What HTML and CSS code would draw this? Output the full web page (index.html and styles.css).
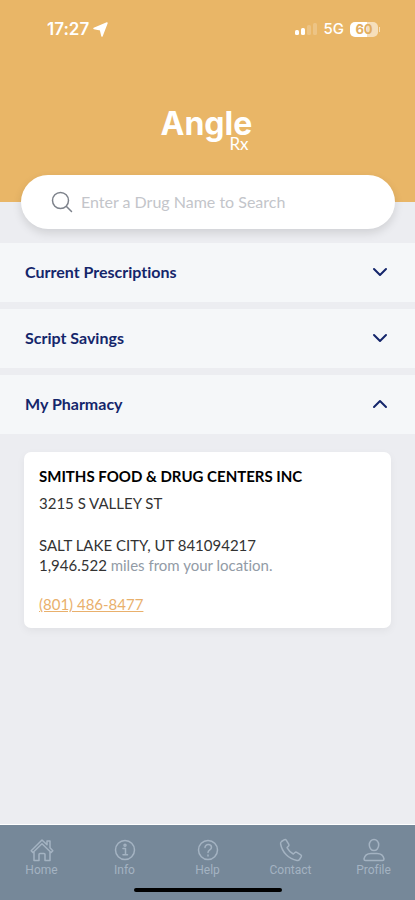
FILE: index.html
```html
<!DOCTYPE html>
<html lang="en">
<head>
  <meta charset="UTF-8" />
  <meta name="viewport" content="width=device-width, initial-scale=1" />
  <title>Angle Rx</title>
  <link rel="stylesheet" href="styles.css">
</head>
<body>

<header class="header">
  <div class="status-bar">
    <div class="status-left">
      <span class="time">17:27</span>
      <svg width="15" height="15" viewBox="0 0 15 15"><path d="M14 1L9 14L7.500 7.800L1 6.500Z" fill="#fff" stroke="#fff" stroke-width="1.500" stroke-linejoin="round"/></svg>
    </div>
    <div class="status-right">
      <svg width="22" height="14" viewBox="0 0 22 14" fill="#fff">
        <rect x="0" y="8" width="4" height="5" rx="1.500"/>
        <rect x="6" y="6" width="4" height="7" rx="1.500"/>
        <rect x="12" y="3" width="4" height="10" rx="1.500" opacity=".2"/>
        <rect x="18" y="1" width="4" height="12" rx="1.500" opacity=".2"/>
      </svg>
      <span class="network">5G</span>
      <span class="battery">60</span>
      <span class="battery-tip"></span>
    </div>
  </div>
  <div class="logo">
    <div class="logo-name">Angle</div>
    <div class="logo-rx">Rx</div>
  </div>
</header>

<main>
  <div class="search">
    <svg width="22" height="22" viewBox="0 0 22 22" fill="none" stroke="#7d828b" stroke-width="1.500" stroke-linecap="round"><circle cx="9.500" cy="9.500" r="8"/><path d="M15.500 15.500L20.500 20.500"/></svg>
    <input type="text" id="drug" aria-label="Drug name" placeholder="Enter a Drug Name to Search" />
  </div>

  <div class="sections">
    <button class="section">
      Current Prescriptions
      <svg class="chevron" viewBox="0 0 16 10"><path d="M2 2L8 8L14 2"/></svg>
    </button>
    <button class="section">
      Script Savings
      <svg class="chevron" viewBox="0 0 16 10"><path d="M2 2L8 8L14 2"/></svg>
    </button>
    <button class="section" aria-expanded="true">
      My Pharmacy
      <svg class="chevron" viewBox="0 0 16 10"><path d="M2 8L8 2L14 8"/></svg>
    </button>
  </div>

  <div class="card">
    <h2>SMITHS FOOD &amp; DRUG CENTERS INC</h2>
    <p class="street">3215 S VALLEY ST</p>
    <p>SALT LAKE CITY, UT 841094217</p>
    <p>1,946.522 <span class="muted">miles from your location.</span></p>
    <a class="phone" href="tel:8014868477">(801) 486-8477</a>
  </div>
</main>

<footer class="footer">
  <nav class="tabs">
    <a class="tab" href="#home">
      <svg class="icon" viewBox="0 0 24 24"><path d="M4 13.500L2.800 14.500L1.200 12.800L12 2L17 6.800V3H20V9.800L22.800 12.800L21.200 14.500L20 13.500V22.500H15V16.500Q15 15.500 14 15.500H10Q9 15.500 9 16.500V22.500H4ZM4 13.500L12 5.800L20 13.500"/></svg>
      Home
    </a>
    <a class="tab" href="#info">
      <svg class="icon" viewBox="0 0 24 24"><circle cx="12" cy="12" r="9.500"/><circle cx="12" cy="7.300" r="1"/><path d="M10 10.500H12.500V16.500M10 16.800H14.500"/></svg>
      Info
    </a>
    <a class="tab" href="#help">
      <svg class="icon" viewBox="0 0 24 24"><circle cx="12" cy="12" r="9.500"/><path d="M9 9.500C9 5.500 15.500 5.800 15.500 9.300C15.500 12 12 11.700 12 14.500M12 17V18"/></svg>
      Help
    </a>
    <a class="tab" href="#contact">
      <svg class="icon" viewBox="0 0 24 24"><path d="M2.500 3.500L5.500 1.700Q6.700 1.200 7.400 2.300L9.800 6.300Q10.300 7.300 9.500 8.100L8 9.700Q10.200 13.800 14.300 16L16 14.500Q16.800 13.800 17.800 14.400L21.800 16.800Q22.900 17.600 22.300 18.700L20.500 21.500Q19.600 22.700 18 22.400C9.500 20.800 3.300 14.500 1.600 6Q1.300 4.400 2.500 3.500Z"/></svg>
      Contact
    </a>
    <a class="tab" href="#profile">
      <svg class="icon" viewBox="0 0 24 24"><ellipse cx="12" cy="7" rx="4.700" ry="5.500"/><path d="M2 21Q3 15.500 9 15.500H15Q21 15.500 22 21Q22 22.500 20.500 22.500H3.500Q2 22.500 2 21Z"/></svg>
      Profile
    </a>
  </nav>
  <div class="home-bar"></div>
</footer>

</body>
</html>
```

FILE: styles.css
```css
* {
  box-sizing: border-box;
}

body {
  font-family: Lato, "Liberation Sans", sans-serif;
  font-size: 16px;
  line-height: 20px;
  font-variant-ligatures: none;
  background: #ecedf1;
  margin: 0;
  min-height: 100vh;
  display: flex;
  flex-direction: column;
}

.header {
  background: #e9b667;
  color: #fff;
  height: 202px;
}

.status-bar {
  display: flex;
  justify-content: space-between;
  align-items: center;
  padding: 19px 35px 0 47px;
  font-family: Inter, sans-serif;
}

.status-left, .status-right {
  display: flex;
  align-items: center;
}

.time {
  font-size: 17px;
  font-weight: 600;
  margin-right: 4px;
}

.network {
  font-size: 15px;
  font-weight: 500;
  margin: 0 6px 0 7px;
}

.battery {
  width: 28px;
  height: 15px;
  border-radius: 5px;
  background: linear-gradient(to right, #fff 60%, #f6dfbb 60%);
  color: #e2ad60;
  font-size: 13px;
  font-weight: 700;
  line-height: 15px;
  text-align: center;
}

.battery-tip {
  width: 1px;
  height: 5px;
  margin-left: 1px;
  background: #f6dfbb;
}

.logo {
  width: 94px;
  margin: 69px auto 0;
}

.logo-name {
  font-family: Inter, sans-serif;
  font-size: 32px;
  font-weight: 700;
  line-height: 32px;
}

.logo-rx {
  font-size: 17px;
  line-height: 8px;
  text-align: right;
  padding-right: 6px;
}

.search {
  display: flex;
  align-items: center;
  gap: 8px;
  height: 54px;
  margin: -27px 20px 14px 21px;
  padding: 0 30px;
  background: #fff;
  border-radius: 27px;
  box-shadow: 0 4px 10px rgba(0, 0, 0, 0.12);
}

.search input {
  flex: 1;
  min-width: 0;
  border: none;
  outline: none;
  padding: 0;
  background: transparent;
  font: inherit;
}

.search input::placeholder {
  color: #c3c5ca;
}

.sections {
  display: flex;
  flex-direction: column;
  gap: 7px;
}

.section {
  display: flex;
  justify-content: space-between;
  align-items: center;
  height: 59px;
  padding: 0 27px 1px 25px;
  border: none;
  background: #f5f7f9;
  color: #14266b;
  font: inherit;
  font-weight: 700;
  font-variant-ligatures: none;
  cursor: pointer;
}

.chevron {
  width: 16px;
  height: 10px;
  fill: none;
  stroke: #14266b;
  stroke-width: 2;
  stroke-linecap: round;
  stroke-linejoin: round;
}

.card {
  margin: 18px 24px;
  padding: 14px 15px;
  background: #fff;
  border-radius: 7px;
  box-shadow: 0 3px 8px rgba(0, 0, 0, 0.05);
  color: #333;
  font-size: 15px;
}

.card h2 {
  margin: 0 0 7px;
  font-size: 15px;
  font-weight: 700;
  color: #000;
}

.card p {
  margin: 0;
}

.card .street {
  margin-bottom: 22px;
}

.muted {
  color: #929ba6;
}

.phone {
  display: block;
  margin-top: 19px;
  color: #e9b06c;
}

.footer {
  margin-top: auto;
  border-top: 1px solid #fff;
  background: #768899;
  padding: 13px 0 8px;
}

.tabs {
  display: grid;
  grid-template-columns: repeat(5, 1fr);
}

.tab {
  display: flex;
  flex-direction: column;
  align-items: center;
  color: #a4b3c2;
  font-family: Roboto, sans-serif;
  font-size: 12px;
  line-height: 16px;
  text-decoration: none;
}

.icon {
  width: 24px;
  height: 24px;
  fill: none;
  stroke: #a4b3c2;
  stroke-width: 1.5px;
  stroke-linejoin: round;
  stroke-linecap: round;
}

.home-bar {
  width: 148px;
  height: 4px;
  margin: 10px auto 0;
  border-radius: 2px;
  background: #000;
}
```
